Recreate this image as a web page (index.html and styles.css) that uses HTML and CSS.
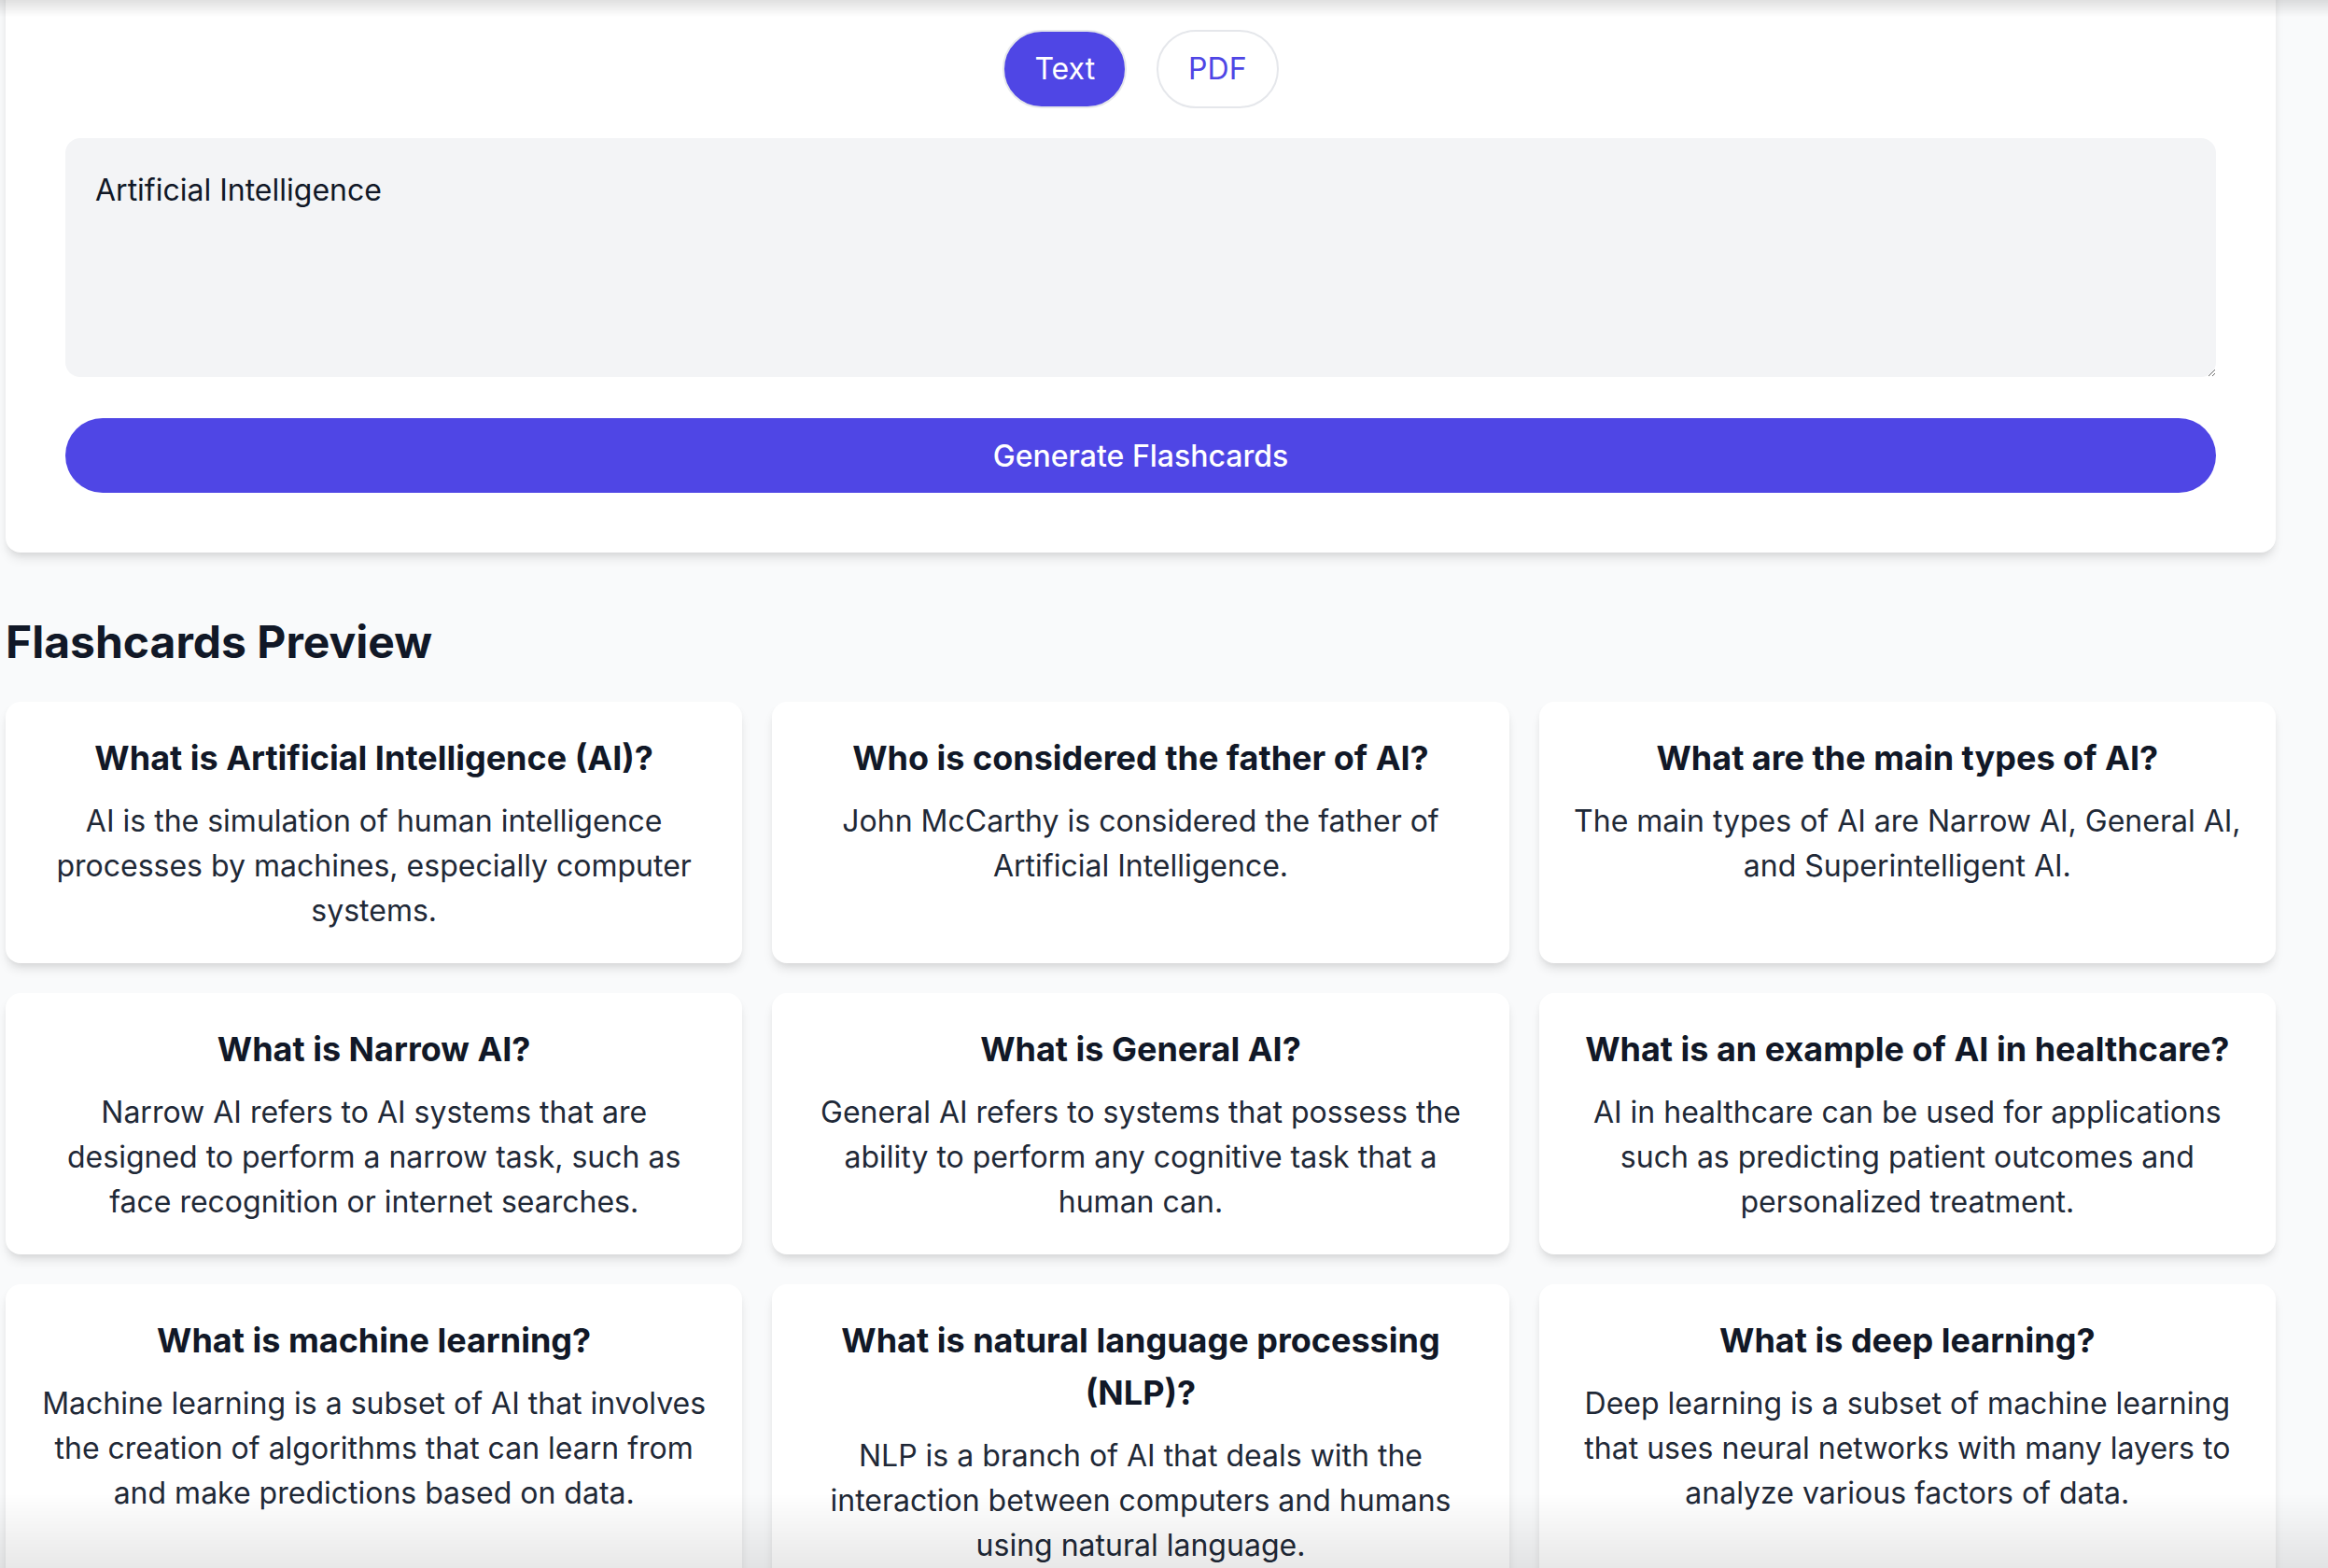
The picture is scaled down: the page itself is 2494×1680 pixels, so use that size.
FILE: index.html
```html
<!DOCTYPE html>
<html lang="en">
<head>
<meta charset="utf-8">
<title>Flashcards</title>
<link rel="stylesheet" href="styles.css">
</head>
<body>
<div class="shade-top"></div>
<div class="shade-bottom"></div>
<main class="page">
  <section class="input-card">
    <div class="tabs">
      <button class="tab tab-active">Text</button>
      <button class="tab">PDF</button>
    </div>
    <textarea class="source">Artificial Intelligence</textarea>
    <button class="generate">Generate Flashcards</button>
  </section>

  <h2 class="section-title">Flashcards Preview</h2>

  <div class="grid">
    <div class="card">
      <h3 class="q">What is Artificial Intelligence (AI)?</h3>
      <p class="a">AI is the simulation of human intelligence processes by machines, especially computer systems.</p>
    </div>
    <div class="card">
      <h3 class="q">Who is considered the father of AI?</h3>
      <p class="a">John McCarthy is considered the father of Artificial Intelligence.</p>
    </div>
    <div class="card">
      <h3 class="q">What are the main types of AI?</h3>
      <p class="a">The main types of AI are Narrow AI, General AI, and Superintelligent AI.</p>
    </div>
    <div class="card">
      <h3 class="q">What is Narrow AI?</h3>
      <p class="a">Narrow AI refers to AI systems that are designed to perform a narrow task, such as face recognition or internet searches.</p>
    </div>
    <div class="card">
      <h3 class="q">What is General AI?</h3>
      <p class="a">General AI refers to systems that possess the ability to perform any cognitive task that a human can.</p>
    </div>
    <div class="card">
      <h3 class="q">What is an example of AI in healthcare?</h3>
      <p class="a">AI in healthcare can be used for applications such as predicting patient outcomes and personalized treatment.</p>
    </div>
    <div class="card">
      <h3 class="q">What is machine learning?</h3>
      <p class="a">Machine learning is a subset of AI that involves the creation of algorithms that can learn from and make predictions based on data.</p>
    </div>
    <div class="card">
      <h3 class="q">What is natural language processing (NLP)?</h3>
      <p class="a">NLP is a branch of AI that deals with the interaction between computers and humans using natural language.</p>
    </div>
    <div class="card">
      <h3 class="q">What is deep learning?</h3>
      <p class="a">Deep learning is a subset of machine learning that uses neural networks with many layers to analyze various factors of data.</p>
    </div>
  </div>
</main>
</body>
</html>
```

FILE: styles.css
```css
* {
  box-sizing: border-box;
}

html, body {
  margin: 0;
  padding: 0;
}

body {
  background: #f9fafb;
  font-family: Inter, "Noto Sans", "Liberation Sans", sans-serif;
  color: #111827;
  overflow: hidden;
}

.shade-top {
  position: fixed;
  left: 0;
  right: 0;
  top: 0;
  height: 18px;
  background: linear-gradient(rgba(0, 0, 0, 0.12), rgba(0, 0, 0, 0));
  z-index: 10;
  pointer-events: none;
}

.shade-bottom {
  position: fixed;
  left: 0;
  right: 0;
  bottom: 0;
  height: 80px;
  background: linear-gradient(rgba(0, 0, 0, 0), rgba(0, 0, 0, 0.09));
  z-index: 10;
  pointer-events: none;
}

.page {
  width: 2432px;
  margin: -32px 0 0 6px;
}

.input-card {
  background: #ffffff;
  border-radius: 16px;
  padding: 64px;
  box-shadow: 0 8px 12px -2px rgba(0, 0, 0, 0.1), 0 4px 8px -4px rgba(0, 0, 0, 0.1);
}

.tabs {
  display: flex;
  justify-content: center;
  gap: 32px;
  margin-bottom: 32px;
}

.tab {
  font-family: inherit;
  font-size: 32px;
  line-height: 48px;
  font-weight: 400;
  padding: 16px 32px;
  border: 2px solid #e5e7eb;
  border-radius: 9999px;
  background: #ffffff;
  color: #4f46e5;
  cursor: pointer;
}

.tab-active {
  background: #4f46e5;
  color: #ffffff;
}

.source {
  display: block;
  width: 100%;
  height: 256px;
  padding: 32px;
  margin: 0 0 44px;
  border: none;
  border-radius: 16px;
  background: #f3f4f6;
  font-family: inherit;
  font-size: 32px;
  line-height: 48px;
  color: #111827;
  resize: vertical;
  outline: none;
}

.generate {
  display: block;
  width: 100%;
  height: 80px;
  border: none;
  border-radius: 9999px;
  background: #4f46e5;
  color: #ffffff;
  font-family: inherit;
  font-size: 32px;
  font-weight: 500;
  cursor: pointer;
}

.section-title {
  margin: 64px 0 32px;
  font-size: 48px;
  line-height: 64px;
  font-weight: 700;
  color: #111827;
}

.grid {
  display: grid;
  grid-template-columns: repeat(3, 1fr);
  gap: 32px;
}

.card {
  background: #ffffff;
  border-radius: 16px;
  padding: 32px;
  text-align: center;
  box-shadow: 0 8px 12px -2px rgba(0, 0, 0, 0.1), 0 4px 8px -4px rgba(0, 0, 0, 0.1);
}

.q {
  margin: 0 0 16px;
  font-size: 36px;
  line-height: 56px;
  font-weight: 700;
  color: #111827;
}

.a {
  margin: 0;
  font-size: 32px;
  line-height: 48px;
  color: #1f2937;
}
```
